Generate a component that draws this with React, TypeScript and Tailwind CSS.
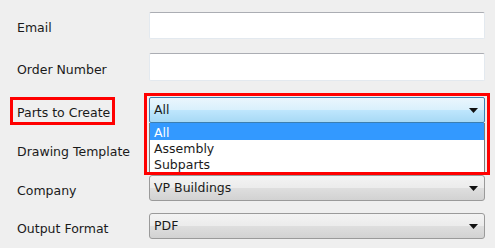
import React from "react";

const font = { fontFamily: '"DejaVu Sans", Verdana, sans-serif' };

function Arrow() {
  return (
    <svg width="9" height="5" viewBox="0 0 9 5" className="shrink-0">
      <path d="M0 0 H9 L4.5 5 Z" fill="#111" />
    </svg>
  );
}

function TextBox() {
  return (
    <div className="h-full w-full rounded-[2px] border border-[#e3e9ef] border-t-[#abadb3] bg-white" />
  );
}

function Combo({ value }: { value: string }) {
  return (
    <div className="flex h-full w-full items-center justify-between rounded-[3px] border border-[#9a9a9a] bg-[linear-gradient(#f3f3f3_0%,#ececec_48%,#dedede_52%,#d2d2d2_100%)] pl-[4px] pr-[6px] text-[12.5px] text-[#1a1a1a]">
      <span className="pt-[1px]">{value}</span>
      <Arrow />
    </div>
  );
}

// Form rows: label, control height, margin above
const rows = [
  { label: "Email", h: "h-[27px]", mt: "mt-[12px]", kind: "text" },
  { label: "Order Number", h: "h-[28px]", mt: "mt-[14px]", kind: "text" },
  { label: "Parts to Create", h: "h-[26px]", mt: "mt-[16px]", kind: "parts" },
  { label: "Drawing Template", h: "h-[26px]", mt: "mt-[13px]", kind: "combo", value: "" },
  { label: "Company", h: "h-[26px]", mt: "mt-[13px]", kind: "combo", value: "VP Buildings" },
  { label: "Output Format", h: "h-[26px]", mt: "mt-[12px]", kind: "combo", value: "PDF" },
];

export default function App() {
  return (
    <div className="h-[248px] w-[495px] overflow-hidden bg-[#efefef]" style={font}>
      <div className="flex flex-col">
        {rows.map((row) => (
          <div key={row.label} className={`flex ${row.h} ${row.mt} items-center`}>
            <div className="relative w-[149px] translate-y-[2px] pl-[17px] pt-[2px] text-[12.5px] text-[#1a1a1a]">
              {row.label}
              {row.kind === "parts" && (
                <div className="absolute -top-[5px] left-[10px] h-[28px] w-[105px] border-[3px] border-[#ff0000]" />
              )}
            </div>
            <div className={`relative ${row.h} w-[336px] ${row.kind === "parts" ? "z-10" : ""}`}>
              {row.kind === "text" && <TextBox />}
              {row.kind === "combo" && <Combo value={row.value ?? ""} />}
              {row.kind === "parts" && (
                <>
                  <div className="flex h-full w-full items-center justify-between rounded-[2px] border border-[#3c7fb1] bg-[linear-gradient(#eaf6fd_0%,#d9f0fc_48%,#bee6fd_52%,#a7d9f5_100%)] pl-[4px] pr-[6px] text-[12.5px] text-[#1a1a1a]">
                    <span className="pt-[1px]">All</span>
                    <Arrow />
                  </div>
                  <div className="absolute left-0 right-0 top-full border border-t-0 border-[#7a7a7a] bg-white text-[12.5px] leading-[16px] text-[#1a1a1a]">
                    <div className="h-[17px] bg-[#3399ff] pl-[4px] pt-[2px] text-white">All</div>
                    <div className="h-[16px] pl-[4px] pt-[1px]">Assembly</div>
                    <div className="h-[17px] pl-[4px] pt-[1px]">Subparts</div>
                  </div>
                  <div className="pointer-events-none absolute -left-[5px] -right-[5px] -top-[4px] h-[82px] border-[3px] border-[#ff0000]" />
                </>
              )}
            </div>
          </div>
        ))}
      </div>
    </div>
  );
}
